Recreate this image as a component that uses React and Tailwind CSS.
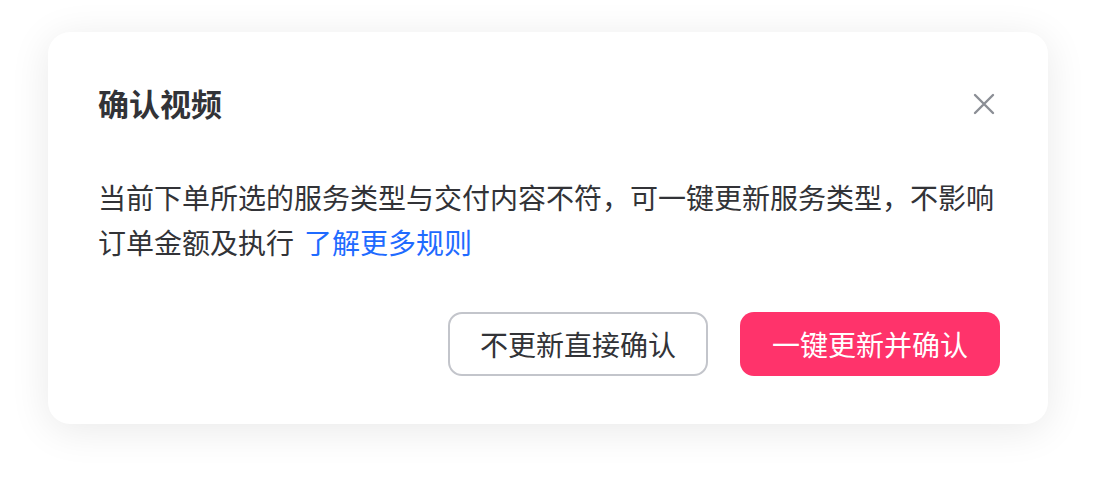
export default function App() {
  return (
    <div
      className="w-[1096px] h-[488px] bg-white pt-[32px] pl-[48px]"
      style={{ fontFamily: '"Noto Sans CJK SC", "Noto Sans", sans-serif' }}
    >
      <div className="w-[1000px] h-[392px] bg-white rounded-[22px] shadow-[0_6px_40px_rgba(0,0,0,0.09)] pt-[51px] pl-[50px] pr-[48px] pb-[48px] flex flex-col">
        <div className="flex items-center justify-between h-[40px]">
          <h2 className="text-[31px] leading-[40px] font-bold text-[#323337]">确认视频</h2>
          <button className="w-[40px] h-[40px] flex items-center justify-center -mr-[4px] mt-[2px]">
            <svg width="22" height="22" viewBox="0 0 22 22" fill="none">
              <path d="M2 2L20 20M20 2L2 20" stroke="#8b8e95" strokeWidth="2.4" strokeLinecap="round" />
            </svg>
          </button>
        </div>
        <p className="mt-[52px] text-[28px] leading-[45px] text-[#323337] pr-[2px]">
          当前下单所选的服务类型与交付内容不符，可一键更新服务类型，不影响订单金额及执行
          <a className="ml-[10px] text-[#1f6bff]">了解更多规则</a>
        </p>
        <div className="mt-auto flex justify-end gap-[32px]">
          <button className="w-[260px] h-[64px] rounded-[14px] border-2 border-[#c3c5cb] text-[28px] text-[#323337] flex items-center justify-center">
            不更新直接确认
          </button>
          <button className="w-[260px] h-[64px] rounded-[14px] bg-[#ff336b] text-[28px] text-white flex items-center justify-center">
            一键更新并确认
          </button>
        </div>
      </div>
    </div>
  );
}
